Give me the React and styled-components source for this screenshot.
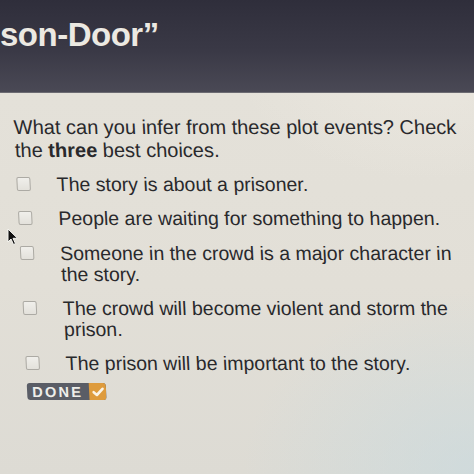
import styled, { createGlobalStyle } from "styled-components";

const GlobalStyle = createGlobalStyle`
  html, body {
    margin: 0;
    padding: 0;
    width: 474px;
    height: 474px;
    overflow: hidden;
    background: #e2dfd7;
  }
`;

const Screen = styled.div`
  position: relative;
  width: 474px;
  height: 474px;
  overflow: hidden;
  font-family: "Liberation Sans", Arial, sans-serif;
  background:
    radial-gradient(ellipse 70% 55% at 100% 100%, rgba(196, 218, 226, 0.55), transparent 70%),
    radial-gradient(ellipse 60% 40% at 90% 10%, rgba(240, 236, 228, 0.6), transparent 70%),
    linear-gradient(180deg, #e5e2da 0%, #e2dfd7 60%, #dddbd4 100%);
`;

const Header = styled.header`
  height: 92px;
  background: linear-gradient(180deg, #2f2e3b 0%, #3a3946 55%, #4a4955 100%);
  border-bottom: 1px solid #6c6b72;
  overflow: hidden;
`;

const Title = styled.h1`
  margin: 0;
  padding-top: 15px;
  font-family: "Liberation Sans", Arial, sans-serif;
  font-weight: 700;
  font-size: 33px;
  letter-spacing: -0.5px;
  line-height: 40px;
  color: #ece9e2;
  white-space: nowrap;
`;

const Panel = styled.main`
  padding: 23px 12px 0 12px;
  transform: skewX(2.9deg);
  transform-origin: top left;
  color: #29292c;
`;

const Question = styled.p`
  margin: 0 0 12px 0;
  font-size: 20px;
  line-height: 23px;
  white-space: nowrap;

  b {
    font-weight: 700;
  }
`;

const Options = styled.ul`
  list-style: none;
  margin: 0;
  padding: 0;
  display: flex;
  flex-direction: column;
  gap: 13.3px;
`;

const Option = styled.li`
  display: grid;
  grid-template-columns: 14px 1fr;
  column-gap: 26px;
  align-items: start;
  font-size: 19.5px;
  line-height: 21px;
`;

const Box = styled.span`
  width: 14px;
  height: 14px;
  margin-top: 3px;
  box-sizing: border-box;
  border: 1px solid #acaaa4;
  border-radius: 2px;
  background: linear-gradient(180deg, #f0efeb, #e3e1db);
`;

const DoneButton = styled.button`
  margin-top: 9px;
  display: inline-flex;
  align-items: stretch;
  height: 17px;
  padding: 0;
  border: none;
  border-radius: 3px;
  overflow: hidden;
  background: #5a5d66;
  font-family: "Liberation Sans", Arial, sans-serif;
`;

const DoneLabel = styled.span`
  display: flex;
  align-items: center;
  padding: 0 6px 0 5px;
  font-size: 14.5px;
  font-weight: 700;
  letter-spacing: 2.3px;
  color: #eeeeea;
`;

const DoneCheck = styled.span`
  display: flex;
  align-items: center;
  justify-content: center;
  width: 17px;
  background: #de9b3c;
`;

const Pointer = styled.svg`
  position: absolute;
  left: 7px;
  top: 228px;
`;

const choices = [
  "The story is about a prisoner.",
  "People are waiting for something to happen.",
  "Someone in the crowd is a major character in the story.",
  "The crowd will become violent and storm the prison.",
  "The prison will be important to the story.",
];

export default function App() {
  return (
    <>
      <GlobalStyle />
      <Screen>
        <Header>
          <Title>son-Door”</Title>
        </Header>
        <Panel>
          <Question>
            What can you infer from these plot events? Check
            <br />
            the <b>three</b> best choices.
          </Question>
          <Options>
            {choices.map((text) => (
              <Option key={text}>
                <Box />
                <span>{text}</span>
              </Option>
            ))}
          </Options>
          <DoneButton>
            <DoneLabel>DONE</DoneLabel>
            <DoneCheck>
              <svg width="12" height="10" viewBox="0 0 12 10">
                <path
                  d="M1.5 5.2 L4.6 8 L10.5 1.8"
                  fill="none"
                  stroke="#fbf3e4"
                  strokeWidth="2.6"
                  strokeLinecap="round"
                  strokeLinejoin="round"
                />
              </svg>
            </DoneCheck>
          </DoneButton>
        </Panel>
        <Pointer width="12" height="18" viewBox="0 0 12 18">
          <path
            d="M1 1 L1 14 L4 11 L6.5 16.5 L8.5 15.6 L6 10.3 L10.5 10.3 Z"
            fill="#111"
            stroke="#f4f4f0"
            strokeWidth="1"
            strokeLinejoin="round"
          />
        </Pointer>
      </Screen>
    </>
  );
}
